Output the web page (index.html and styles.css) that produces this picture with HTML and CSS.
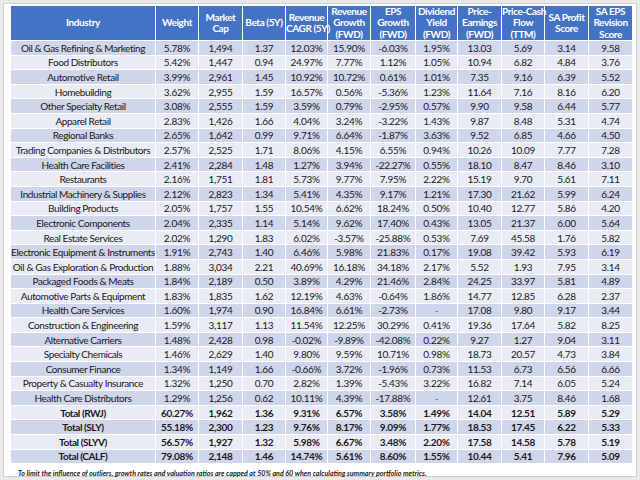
FILE: index.html
```html
<!DOCTYPE html>
<html>
<head>
<meta charset="utf-8">
<link rel="stylesheet" href="styles.css">
</head>
<body>
<div class="card">
<table class="grid">
<colgroup>
<col class="c-ind"><col class="c-w"><col class="c-mc"><col class="c-beta"><col class="c-cagr"><col class="c-rg"><col class="c-eps"><col class="c-div"><col class="c-pe"><col class="c-pcf"><col class="c-sap"><col class="c-sae">
</colgroup>
<thead>
<tr>
<th>Industry</th><th>Weight</th><th>Market<br>Cap</th><th>Beta (5Y)</th><th>Revenue<br>CAGR (5Y)</th><th>Revenue<br>Growth<br>(FWD)</th><th>EPS<br>Growth<br>(FWD)</th><th>Dividend<br>Yield<br>(FWD)</th><th>Price-<br>Earnings<br>(FWD)</th><th>Price-Cash<br>Flow<br>(TTM)</th><th>SA Profit<br>Score</th><th>SA EPS<br>Revision<br>Score</th>
</tr>
</thead>
<tbody>
<tr><td>Oil &amp; Gas Refining &amp; Marketing</td><td>5.78%</td><td>1,494</td><td>1.37</td><td>12.03%</td><td>15.90%</td><td>-6.03%</td><td>1.95%</td><td>13.03</td><td>5.69</td><td>3.14</td><td>9.58</td></tr>
<tr><td>Food Distributors</td><td>5.42%</td><td>1,447</td><td>0.94</td><td>24.97%</td><td>7.77%</td><td>1.12%</td><td>1.05%</td><td>10.94</td><td>6.82</td><td>4.84</td><td>3.76</td></tr>
<tr><td>Automotive Retail</td><td>3.99%</td><td>2,961</td><td>1.45</td><td>10.92%</td><td>10.72%</td><td>0.61%</td><td>1.01%</td><td>7.35</td><td>9.16</td><td>6.39</td><td>5.52</td></tr>
<tr><td>Homebuilding</td><td>3.62%</td><td>2,955</td><td>1.59</td><td>16.57%</td><td>0.56%</td><td>-5.36%</td><td>1.23%</td><td>11.64</td><td>7.16</td><td>8.16</td><td>6.20</td></tr>
<tr><td>Other Specialty Retail</td><td>3.08%</td><td>2,555</td><td>1.59</td><td>3.59%</td><td>0.79%</td><td>-2.95%</td><td>0.57%</td><td>9.90</td><td>9.58</td><td>6.44</td><td>5.77</td></tr>
<tr><td>Apparel Retail</td><td>2.83%</td><td>1,426</td><td>1.66</td><td>4.04%</td><td>3.24%</td><td>-3.22%</td><td>1.43%</td><td>9.87</td><td>8.48</td><td>5.31</td><td>4.74</td></tr>
<tr><td>Regional Banks</td><td>2.65%</td><td>1,642</td><td>0.99</td><td>9.71%</td><td>6.64%</td><td>-1.87%</td><td>3.63%</td><td>9.52</td><td>6.85</td><td>4.66</td><td>4.50</td></tr>
<tr><td>Trading Companies &amp; Distributors</td><td>2.57%</td><td>2,525</td><td>1.71</td><td>8.06%</td><td>4.15%</td><td>6.55%</td><td>0.94%</td><td>10.26</td><td>10.09</td><td>7.77</td><td>7.28</td></tr>
<tr><td>Health Care Facilities</td><td>2.41%</td><td>2,284</td><td>1.48</td><td>1.27%</td><td>3.94%</td><td>-22.27%</td><td>0.55%</td><td>18.10</td><td>8.47</td><td>8.46</td><td>3.10</td></tr>
<tr><td>Restaurants</td><td>2.16%</td><td>1,751</td><td>1.81</td><td>5.73%</td><td>9.77%</td><td>7.95%</td><td>2.22%</td><td>15.19</td><td>9.70</td><td>5.61</td><td>7.11</td></tr>
<tr><td>Industrial Machinery &amp; Supplies</td><td>2.12%</td><td>2,823</td><td>1.34</td><td>5.41%</td><td>4.35%</td><td>9.17%</td><td>1.21%</td><td>17.30</td><td>21.62</td><td>5.99</td><td>6.24</td></tr>
<tr><td>Building Products</td><td>2.05%</td><td>1,757</td><td>1.55</td><td>10.54%</td><td>6.62%</td><td>18.24%</td><td>0.50%</td><td>10.40</td><td>12.77</td><td>5.86</td><td>4.20</td></tr>
<tr><td>Electronic Components</td><td>2.04%</td><td>2,335</td><td>1.14</td><td>5.14%</td><td>9.62%</td><td>17.40%</td><td>0.43%</td><td>13.05</td><td>21.37</td><td>6.00</td><td>5.64</td></tr>
<tr><td>Real Estate Services</td><td>2.02%</td><td>1,290</td><td>1.83</td><td>6.02%</td><td>-3.57%</td><td>-25.88%</td><td>0.53%</td><td>7.69</td><td>45.58</td><td>1.76</td><td>5.82</td></tr>
<tr><td>Electronic Equipment &amp; Instruments</td><td>1.91%</td><td>2,743</td><td>1.40</td><td>6.46%</td><td>5.98%</td><td>21.83%</td><td>0.17%</td><td>19.08</td><td>39.42</td><td>5.93</td><td>6.19</td></tr>
<tr><td>Oil &amp; Gas Exploration &amp; Production</td><td>1.88%</td><td>3,034</td><td>2.21</td><td>40.69%</td><td>16.18%</td><td>34.18%</td><td>2.17%</td><td>5.52</td><td>1.93</td><td>7.95</td><td>3.14</td></tr>
<tr><td>Packaged Foods &amp; Meats</td><td>1.84%</td><td>2,189</td><td>0.50</td><td>3.89%</td><td>4.29%</td><td>21.46%</td><td>2.84%</td><td>24.25</td><td>33.97</td><td>5.81</td><td>4.89</td></tr>
<tr><td>Automotive Parts &amp; Equipment</td><td>1.83%</td><td>1,835</td><td>1.62</td><td>12.19%</td><td>4.63%</td><td>-0.64%</td><td>1.86%</td><td>14.77</td><td>12.85</td><td>6.28</td><td>2.37</td></tr>
<tr><td>Health Care Services</td><td>1.60%</td><td>1,974</td><td>0.90</td><td>16.84%</td><td>6.61%</td><td>-2.73%</td><td class="dash">-</td><td>17.08</td><td>9.80</td><td>9.17</td><td>3.44</td></tr>
<tr><td>Construction &amp; Engineering</td><td>1.59%</td><td>3,117</td><td>1.13</td><td>11.54%</td><td>12.25%</td><td>30.29%</td><td>0.41%</td><td>19.36</td><td>17.64</td><td>5.82</td><td>8.25</td></tr>
<tr><td>Alternative Carriers</td><td>1.48%</td><td>2,428</td><td>0.98</td><td>-0.02%</td><td>-9.89%</td><td>-42.08%</td><td>0.22%</td><td>9.27</td><td>1.27</td><td>9.04</td><td>3.11</td></tr>
<tr><td>Specialty Chemicals</td><td>1.46%</td><td>2,629</td><td>1.40</td><td>9.80%</td><td>9.59%</td><td>10.71%</td><td>0.98%</td><td>18.73</td><td>20.57</td><td>4.73</td><td>3.84</td></tr>
<tr><td>Consumer Finance</td><td>1.34%</td><td>1,149</td><td>1.66</td><td>-0.66%</td><td>3.72%</td><td>-1.96%</td><td>0.73%</td><td>11.53</td><td>6.73</td><td>6.56</td><td>6.66</td></tr>
<tr><td>Property &amp; Casualty Insurance</td><td>1.32%</td><td>1,250</td><td>0.70</td><td>2.82%</td><td>1.39%</td><td>-5.43%</td><td>3.22%</td><td>16.82</td><td>7.14</td><td>6.05</td><td>5.24</td></tr>
<tr><td>Health Care Distributors</td><td>1.29%</td><td>1,256</td><td>0.62</td><td>10.11%</td><td>4.39%</td><td>-17.88%</td><td class="dash">-</td><td>12.61</td><td>3.75</td><td>8.46</td><td>1.68</td></tr>
<tr class="total"><td>Total (RWJ)</td><td>60.27%</td><td>1,962</td><td>1.36</td><td>9.31%</td><td>6.57%</td><td>3.58%</td><td>1.49%</td><td>14.04</td><td>12.51</td><td>5.89</td><td>5.29</td></tr>
<tr class="total"><td>Total (SLY)</td><td>55.18%</td><td>2,300</td><td>1.23</td><td>9.76%</td><td>8.17%</td><td>9.09%</td><td>1.77%</td><td>18.53</td><td>17.45</td><td>6.22</td><td>5.33</td></tr>
<tr class="total"><td>Total (SLYV)</td><td>56.57%</td><td>1,927</td><td>1.32</td><td>5.98%</td><td>6.67%</td><td>3.48%</td><td>2.20%</td><td>17.58</td><td>14.58</td><td>5.78</td><td>5.19</td></tr>
<tr class="total"><td>Total (CALF)</td><td>79.08%</td><td>2,148</td><td>1.46</td><td>14.74%</td><td>5.61%</td><td>8.60%</td><td>1.55%</td><td>10.44</td><td>5.41</td><td>7.96</td><td>5.09</td></tr>
</tbody>
</table>
<p class="note">To limit the influence of outliers, growth rates and valuation ratios are capped at 50% and 60 when calculating summary portfolio metrics.</p>
</div>
</body>
</html>
```

FILE: styles.css
```css
html, body {
  margin: 0;
  padding: 0;
}
body {
  background: #e9e9e9;
  padding: 3px;
  width: 634px;
  height: 474px;
  overflow: hidden;
}
.card {
  box-sizing: border-box;
  width: 634px;
  height: 474px;
  background: #ffffff;
  border: 1px solid #d2d2d2;
  padding: 1px 0 0 6px;
  font-family: "Lato", sans-serif;
  color: #1a1a1a;
}
.grid {
  border-collapse: collapse;
  table-layout: fixed;
  width: 622px;
  font-size: 10px;
  letter-spacing: -0.3px;
}
.c-ind { width: 145px; }
.c-w { width: 43px; }
.c-mc { width: 44px; }
.c-beta { width: 43px; }
.c-cagr { width: 42px; }
.c-rg { width: 43px; }
.c-eps { width: 45px; }
.c-div { width: 42px; }
.c-pe { width: 44px; }
.c-pcf { width: 43px; }
.c-sap { width: 44px; }
.c-sae { width: 44px; }
.grid th {
  background: #4472c4;
  color: #ffffff;
  font-weight: 700;
  font-size: 10px;
  letter-spacing: -0.4px;
  height: 34px;
  padding: 0;
  line-height: 11.3px;
  border: 1px solid #ffffff;
  text-align: center;
  vertical-align: middle;
  white-space: nowrap;
}
.grid td {
  height: 13.6px;
  padding: 0;
  line-height: 12px;
  border: 1px solid #ffffff;
  text-align: center;
  vertical-align: middle;
  white-space: nowrap;
  overflow: hidden;
}
.grid td:first-child {
  letter-spacing: -0.42px;
}
.grid tbody tr:nth-child(odd) td {
  background: #cfd5ea;
}
.grid tbody tr:nth-child(even) td {
  background: #e9ebf5;
}
.grid tr.total td {
  font-weight: 700;
}
.grid td.dash {
  color: #666666;
}
.note {
  margin: 5px 0 0 8px;
  font-size: 7.1px;
  font-style: italic;
  font-weight: 700;
  color: #222222;
  white-space: nowrap;
}
```
